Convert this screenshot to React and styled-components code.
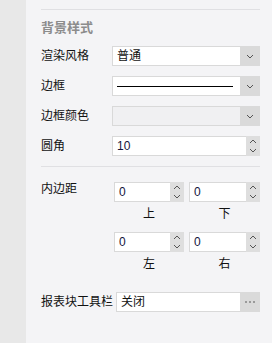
import React from 'react';
import styled, { createGlobalStyle } from 'styled-components';

const Global = createGlobalStyle`
  html, body { margin: 0; padding: 0; }
  body {
    font-family: "Liberation Sans", "Noto Sans CJK SC", sans-serif;
    font-size: 12px;
    color: #111;
  }
`;

const Page = styled.div`
  display: flex;
  width: 272px;
  height: 343px;
  overflow: hidden;
`;

const Strip = styled.div`
  width: 26px;
  flex-shrink: 0;
  background: #e8e8e8;
`;

const Panel = styled.div`
  flex: 1;
  background: #f4f4f6;
  padding: 9px 12px 0 15px;
  box-sizing: border-box;
`;

const Divider = styled.div`
  height: 1px;
  background: #e0e0e3;
  margin-top: ${(p) => p.$mt || 0}px;
`;

const Title = styled.div`
  height: 36px;
  line-height: 36px;
  font-size: 13px;
  font-weight: bold;
  color: #8c8c8c;
`;

const Rows = styled.div`
  display: flex;
  flex-direction: column;
  gap: 10px;
`;

const Row = styled.div`
  display: flex;
  align-items: center;
  height: 20px;
  margin-top: ${(p) => p.$mt || 0}px;
`;

const Label = styled.div`
  width: ${(p) => p.$w}px;
  flex-shrink: 0;
  white-space: nowrap;
  line-height: 20px;
`;

const Field = styled.div`
  flex: 1;
  display: flex;
  height: 20px;
  box-sizing: border-box;
  border: 1px solid #d9d9d9;
  background: ${(p) => (p.$disabled ? '#f0f0f2' : '#fff')};
`;

const FieldText = styled.div`
  flex: 1;
  padding-left: 4px;
  line-height: 18px;
  color: ${(p) => (p.$num ? '#14143c' : '#111')};
  white-space: nowrap;
  overflow: hidden;
`;

const LineSample = styled.div`
  flex: 1;
  align-self: center;
  height: 1px;
  background: #000;
  margin: 0 7px 0 4px;
`;

const SideButton = styled.div`
  width: 20px;
  margin: -1px -1px -1px 0;
  background: #dadada;
  display: flex;
  align-items: center;
  justify-content: center;
`;

const Spinner = styled.div`
  width: 14px;
  margin: -1px -1px -1px 0;
  background: #dedede;
  display: flex;
  flex-direction: column;
  align-items: center;
  justify-content: center;
  gap: 4px;
`;

const Grid = styled.div`
  display: grid;
  grid-template-columns: 68px 70px 1fr;
  column-gap: 5px;
  margin-top: 15px;
`;

const GridLabel = styled.div`
  line-height: 14px;
  align-self: start;
  white-space: nowrap;
`;

const SubLabel = styled.div`
  height: 24px;
  line-height: 24px;
  text-align: center;
  margin-bottom: ${(p) => p.$mb || 0}px;
`;

const ChevronDown = () => (
  <svg width="8" height="5" viewBox="0 0 8 5">
    <path d="M1 1 L4 4 L7 1" fill="none" stroke="#555" strokeWidth="1" />
  </svg>
);

const ChevronUp = () => (
  <svg width="8" height="5" viewBox="0 0 8 5">
    <path d="M1 4 L4 1 L7 4" fill="none" stroke="#555" strokeWidth="1" />
  </svg>
);

const MoreDots = () => (
  <svg width="10" height="2" viewBox="0 0 10 2">
    <rect x="0" y="0" width="2" height="2" fill="#9a9a9a" />
    <rect x="4" y="0" width="2" height="2" fill="#9a9a9a" />
    <rect x="8" y="0" width="2" height="2" fill="#9a9a9a" />
  </svg>
);

const NumberInput = ({ value }) => (
  <Field>
    <FieldText $num>{value}</FieldText>
    <Spinner>
      <ChevronUp />
      <ChevronDown />
    </Spinner>
  </Field>
);

export default function App() {
  return (
    <>
      <Global />
      <Page>
        <Strip />
        <Panel>
          <Divider />
          <Title>背景样式</Title>
          <Rows>
            <Row>
              <Label $w={71}>渲染风格</Label>
              <Field>
                <FieldText>普通</FieldText>
                <SideButton><ChevronDown /></SideButton>
              </Field>
            </Row>
            <Row>
              <Label $w={71}>边框</Label>
              <Field>
                <LineSample />
                <SideButton><ChevronDown /></SideButton>
              </Field>
            </Row>
            <Row>
              <Label $w={71}>边框颜色</Label>
              <Field $disabled>
                <FieldText />
                <SideButton><ChevronDown /></SideButton>
              </Field>
            </Row>
            <Row>
              <Label $w={71}>圆角</Label>
              <NumberInput value="10" />
            </Row>
          </Rows>
          <Divider $mt={10} />
          <Grid>
            <GridLabel>内边距</GridLabel>
            <NumberInput value="0" />
            <NumberInput value="0" />
            <div />
            <SubLabel $mb={6}>上</SubLabel>
            <SubLabel $mb={6}>下</SubLabel>
            <div />
            <NumberInput value="0" />
            <NumberInput value="0" />
            <div />
            <SubLabel>左</SubLabel>
            <SubLabel>右</SubLabel>
          </Grid>
          <Row $mt={16}>
            <Label $w={75}>报表块工具栏</Label>
            <Field>
              <FieldText>关闭</FieldText>
              <SideButton><MoreDots /></SideButton>
            </Field>
          </Row>
        </Panel>
      </Page>
    </>
  );
}
